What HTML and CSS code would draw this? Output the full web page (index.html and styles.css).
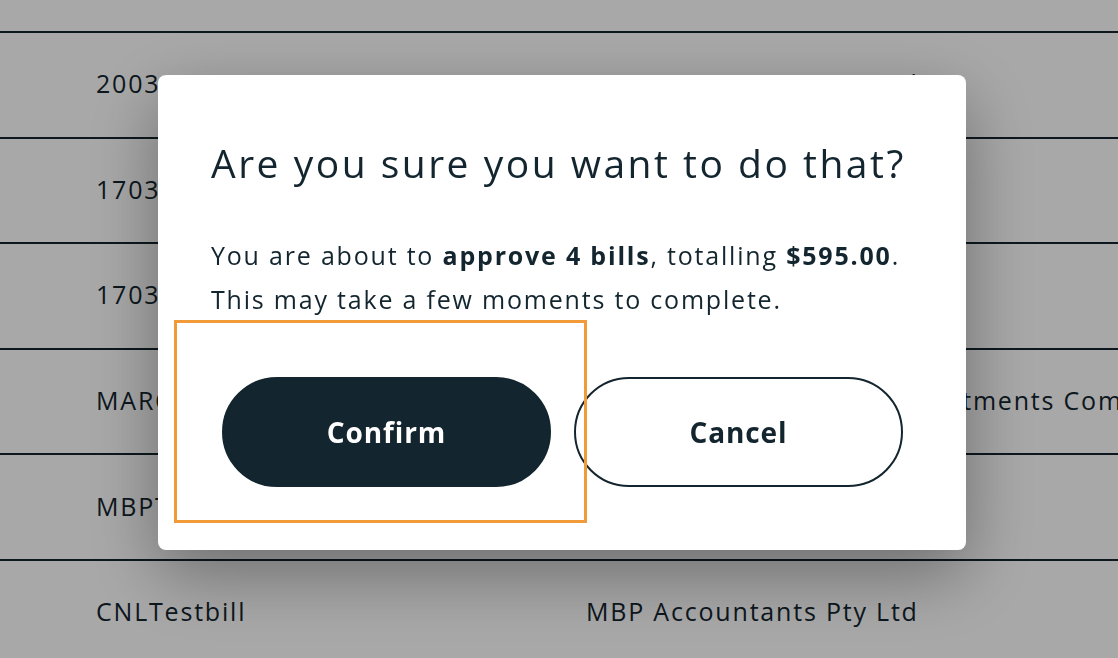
FILE: index.html
```html
<!DOCTYPE html>
<html lang="en">
<head>
<meta charset="utf-8">
<title>Approve bills</title>
<link rel="stylesheet" href="styles.css">
</head>
<body>
<div class="page">
  <div class="table">
    <div class="row"><span class="c1">20032001</span><span class="c2">MBP Accountants Pty Ltd</span></div>
    <div class="row"><span class="c1">17032024</span><span class="c2">MBP Accountants Pty Ltd</span></div>
    <div class="row"><span class="c1">17032023</span><span class="c2">MBP Accountants Pty Ltd</span></div>
    <div class="row"><span class="c1">MARCH2024</span><span class="c2">MARC Superannuation Investments Company</span></div>
    <div class="row"><span class="c1">MBPTest</span><span class="c2">MBP Accountants Pty Ltd</span></div>
    <div class="row"><span class="c1">CNLTestbill</span><span class="c2">MBP Accountants Pty Ltd</span></div>
  </div>
</div>
<div class="overlay">
  <div class="modal">
    <h2 class="title">Are you sure you want to do that?</h2>
    <p class="msg">You are about to <strong>approve 4 bills</strong>, totalling <strong>$595.00</strong>.<br>This may take a few moments to complete.</p>
    <div class="actions">
      <button class="btn btn-primary">Confirm</button>
      <button class="btn btn-secondary">Cancel</button>
    </div>
    <div class="highlight"></div>
  </div>
</div>
</body>
</html>
```
FILE: styles.css
```css
* { box-sizing: border-box; }
html, body { margin: 0; padding: 0; }
body {
  font-family: "Open Sans", "Noto Sans", "Liberation Sans", sans-serif;
  color: #13252e;
  background: #ffffff;
  width: 1118px;
  height: 658px;
  overflow: hidden;
}
.page { padding-top: 31px; }
.table { display: flex; flex-direction: column; }
.row {
  height: 105.6px;
  border-top: 2px solid #13252e;
  padding-bottom: 3px;
  display: flex;
  align-items: center;
  font-size: 25px;
  font-weight: 500;
  letter-spacing: 1.8px;
  white-space: nowrap;
  overflow: hidden;
}
.c1 { flex: none; width: 586px; padding-left: 96px; }
.c2 { flex: none; }

.overlay {
  position: fixed;
  inset: 0;
  background: rgba(0, 0, 0, 0.34);
  display: flex;
  align-items: flex-start;
  padding: 75px 0 0 158px;
}
.modal {
  position: relative;
  width: 808px;
  height: 475px;
  background: #ffffff;
  border-radius: 8px;
  box-shadow: 0 24px 70px rgba(0, 0, 0, 0.35);
  padding: 60px 30px 0 53px;
}
.title {
  margin: 0;
  font-size: 39px;
  font-weight: 400;
  line-height: 56px;
  letter-spacing: 2.5px;
  white-space: nowrap;
}
.msg {
  margin: 42px 0 0;
  font-size: 25px;
  line-height: 44px;
  font-weight: 500;
  letter-spacing: 1.8px;
  white-space: nowrap;
}
.msg strong { font-weight: 700; }
.actions {
  display: flex;
  gap: 23px;
  margin: 56px 0 0 11px;
}
.btn {
  width: 329px;
  height: 110px;
  border-radius: 55px;
  font-family: inherit;
  font-size: 28px;
  font-weight: 700;
  letter-spacing: 0.9px;
  cursor: pointer;
}
.btn-primary {
  background: #13252e;
  color: #ffffff;
  border: 2px solid #13252e;
}
.btn-secondary {
  background: #ffffff;
  color: #13252e;
  border: 2px solid #13252e;
}
.highlight {
  position: absolute;
  left: 16px;
  top: 245px;
  width: 413px;
  height: 203px;
  border: 3px solid #f19a38;
  pointer-events: none;
}
```
